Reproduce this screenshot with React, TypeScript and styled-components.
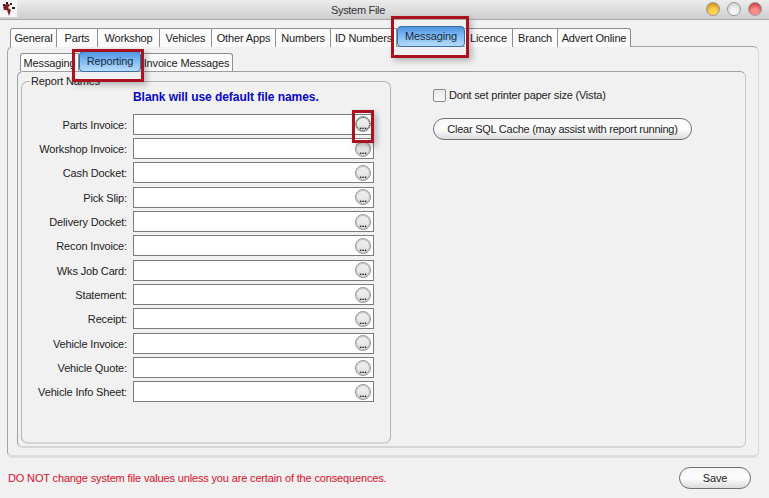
import React from "react";
import styled, { createGlobalStyle } from "styled-components";

const GlobalStyle = createGlobalStyle`
  html, body {
    margin: 0;
    padding: 0;
    background: #f0f0f0;
  }
  body {
    font-family: "Liberation Sans", Arial, sans-serif;
    font-size: 11px;
    letter-spacing: -0.15px;
    color: #222;
  }
`;

const Window = styled.div`
  position: relative;
  width: 769px;
  height: 498px;
  overflow: hidden;
  background: #f1f1f1;
`;

const TitleBar = styled.div`
  height: 19px;
  display: flex;
  align-items: center;
  justify-content: center;
  position: relative;
  background: linear-gradient(#ececec, #cfcfcf);
  border-bottom: 1px solid #a9a9a9;
`;

const TitleText = styled.span`
  color: #333;
  font-size: 11px;
  letter-spacing: -0.3px;
  margin-right: 53px;
`;

const AppIcon = styled.div`
  position: absolute;
  left: 0;
  top: 0;
  width: 17px;
  height: 17px;
  background: #f7f7f7;
  display: flex;
  align-items: center;
  justify-content: center;
`;

const WindowButtons = styled.div`
  position: absolute;
  right: 7px;
  top: 2px;
  display: flex;
  gap: 7px;
`;

const WindowButton = styled.div<{ $color: string; $dark: string }>`
  width: 14px;
  height: 14px;
  border-radius: 50%;
  border: 1px solid #9a9a9a;
  box-sizing: border-box;
  background: radial-gradient(circle at 50% 75%, ${(p) => p.$color} 30%, ${(p) => p.$dark} 100%);
`;

const MainTabs = styled.div`
  display: flex;
  height: 19px;
  margin: 8px 0 0 10px;
  position: relative;
  z-index: 1;
`;

const Tab = styled.div<{ $w: number; $active?: boolean }>`
  width: ${(p) => p.$w}px;
  height: 100%;
  box-sizing: border-box;
  display: flex;
  align-items: center;
  justify-content: center;
  white-space: nowrap;
  background: #fbfbfb;
  border: 1px solid #8e8e8e;
  border-left-width: 0;
  border-bottom: 0;
  font-size: 11px;
  color: #222;
  &:first-child {
    border-left-width: 1px;
    border-radius: 3px 0 0 0;
  }
  &:last-child {
    border-radius: 0 3px 0 0;
  }
  ${(p) =>
    p.$active &&
    `
    height: 21px;
    margin-top: -2px;
    padding-bottom: 2px;
    border: 1px solid #3a6ea8;
    border-radius: 4px;
    background: linear-gradient(#4e95e4 0%, #7db9f2 45%, #b7dcfb 100%);
    color: #1c2b3a;
  `}
`;

const OuterPanel = styled.div`
  box-sizing: border-box;
  width: 752px;
  height: 412px;
  margin: -1px 0 0 7px;
  padding: 6px 13px 0 9px;
  border: 1px solid #a5a5a5;
  border-right-color: #d9d9d9;
  border-bottom: 3px solid #dcdcdc;
  border-radius: 6px;
  background: #f1f1f1;
`;

const SubTabs = styled(MainTabs)`
  height: 18px;
  margin: 0 0 0 3px;
`;

const InnerPanel = styled.div`
  box-sizing: border-box;
  height: 377px;
  width: 729px;
  margin-top: 0;
  padding: 9px 0 0 3px;
  display: flex;
  border: 1px solid #9f9f9f;
  border-right-color: #c9c9c9;
  border-bottom: 2px solid #d6d6d6;
  border-radius: 6px;
  background: #f1f1f1;
`;

const ReportGroup = styled.fieldset`
  box-sizing: border-box;
  position: relative;
  width: 370px;
  height: 363px;
  margin: 0;
  padding: 0;
  border: 1px solid #b5b5b5;
  border-bottom: 2px solid #d3d3d3;
  border-radius: 7px;
`;

const GroupLegend = styled.span`
  position: absolute;
  left: 8px;
  top: -7px;
  padding: 0 1px;
  background: #f1f1f1;
  font-size: 11px;
  line-height: 13px;
`;

const Hint = styled.div`
  margin: 8px 0 0 111px;
  height: 14px;
  line-height: 14px;
  font-size: 12px;
  font-weight: bold;
  color: #0808c8;
  letter-spacing: -0.05px;
`;

const Rows = styled.div`
  display: grid;
  grid-auto-rows: 24.35px;
  margin-top: 8px;
`;

const Row = styled.div`
  display: flex;
  align-items: center;
`;

const RowLabel = styled.label`
  width: 105px;
  padding-top: 1px;
  text-align: right;
  font-size: 11px;
  white-space: nowrap;
`;

const FileBox = styled.div`
  box-sizing: border-box;
  width: 241px;
  height: 21px;
  margin-left: 6px;
  display: flex;
  align-items: center;
  justify-content: flex-end;
  padding-right: 2px;
  background: #fff;
  border: 1px solid #7c7c7c;
`;

const BrowseButton = styled.div<{ $focus?: boolean }>`
  width: 16px;
  height: 16px;
  box-sizing: border-box;
  border-radius: 50%;
  border: 1px solid #969696;
  box-shadow: inset 0 0 0 1px #c8c8c8;
  background: linear-gradient(#ececec 40%, #dcdcdc);
  display: flex;
  align-items: flex-end;
  justify-content: center;
  font-size: 9px;
  font-weight: bold;
  line-height: 9px;
  letter-spacing: 0;
  color: #000;
  ${(p) => p.$focus && "outline: 1px dotted #444; outline-offset: -2px;"}
`;

const OptionsColumn = styled.div`
  margin-left: 42px;
  padding-top: 6px;
  display: flex;
  flex-direction: column;
  align-items: flex-start;
`;

const CheckRow = styled.label`
  display: flex;
  align-items: center;
  gap: 3px;
  height: 16px;
  font-size: 11px;
  letter-spacing: -0.2px;
`;

const CheckBox = styled.span`
  box-sizing: border-box;
  width: 13px;
  height: 13px;
  border: 1px solid #8a8a8a;
  border-radius: 2px;
  background: linear-gradient(#e9e9e9, #f9f9f9);
`;

const PillButton = styled.div<{ $w: number }>`
  box-sizing: border-box;
  width: ${(p) => p.$w}px;
  height: 22px;
  display: flex;
  align-items: center;
  justify-content: center;
  border: 1px solid #6f6f6f;
  border-radius: 11px;
  background: linear-gradient(#f7f7f7 0%, #fdfdfd 50%, #dcdcdc 100%);
  font-size: 11px;
  white-space: nowrap;
`;

const ClearButton = styled(PillButton)`
  margin-top: 15px;
  letter-spacing: -0.25px;
`;

const Footer = styled.div`
  display: flex;
  align-items: center;
  justify-content: space-between;
  margin-top: 9px;
  padding: 0 18px 0 8px;
`;

const Warning = styled.span`
  color: #d80f2a;
  font-size: 11px;
`;

const Callout = styled.div<{ $x: number; $y: number; $w: number; $h: number }>`
  position: absolute;
  left: ${(p) => p.$x}px;
  top: ${(p) => p.$y}px;
  width: ${(p) => p.$w}px;
  height: ${(p) => p.$h}px;
  box-sizing: border-box;
  border: 3px solid #a8131f;
  box-shadow: 3px 3px 6px rgba(0, 0, 0, 0.25);
  z-index: 5;
  pointer-events: none;
`;

const mainTabs = [
  { name: "General", w: 47 },
  { name: "Parts", w: 41 },
  { name: "Workshop", w: 62 },
  { name: "Vehicles", w: 52 },
  { name: "Other Apps", w: 64 },
  { name: "Numbers", w: 55 },
  { name: "ID Numbers", w: 66 },
  { name: "Messaging", w: 68, active: true },
  { name: "Licence", w: 48 },
  { name: "Branch", w: 45 },
  { name: "Advert Online", w: 73 },
];

const subTabs = [
  { name: "Messaging", w: 59 },
  { name: "Reporting", w: 62, active: true },
  { name: "Invoice Messages", w: 92 },
];

const reports = [
  "Parts Invoice:",
  "Workshop Invoice:",
  "Cash Docket:",
  "Pick Slip:",
  "Delivery Docket:",
  "Recon Invoice:",
  "Wks Job Card:",
  "Statement:",
  "Receipt:",
  "Vehicle Invoice:",
  "Vehicle Quote:",
  "Vehicle Info Sheet:",
];

const App = () => {
  return (
    <Window>
      <GlobalStyle />
      <TitleBar>
        <AppIcon>
          <svg width="14" height="16" viewBox="0 0 14 16">
            <path d="M1 6 L5 2 L8 4 L6 7 L9 9 L7 15 L5 9 L2 9 Z" fill="#8a1c24" />
            <path d="M4 1h2v2H4zM8 2h2v2H8zM10 6h3v2h-3zM1 3h2v2H1z" fill="#222" />
          </svg>
        </AppIcon>
        <TitleText>System File</TitleText>
        <WindowButtons>
          <WindowButton $color="#ffd24a" $dark="#c47a0c" />
          <WindowButton $color="#f4f4f4" $dark="#c4c4c4" />
          <WindowButton $color="#ff8d8d" $dark="#b4242c" />
        </WindowButtons>
      </TitleBar>

      <MainTabs>
        {mainTabs.map((t) => (
          <Tab key={t.name} $w={t.w} $active={t.active}>
            {t.name}
          </Tab>
        ))}
      </MainTabs>

      <OuterPanel>
        <SubTabs>
          {subTabs.map((t) => (
            <Tab key={t.name} $w={t.w} $active={t.active}>
              {t.name}
            </Tab>
          ))}
        </SubTabs>
        <InnerPanel>
          <ReportGroup>
            <GroupLegend>Report Names</GroupLegend>
            <Hint>Blank will use default file names.</Hint>
            <Rows>
              {reports.map((r, i) => (
                <Row key={r}>
                  <RowLabel>{r}</RowLabel>
                  <FileBox>
                    <BrowseButton $focus={i === 0}>...</BrowseButton>
                  </FileBox>
                </Row>
              ))}
            </Rows>
          </ReportGroup>
          <OptionsColumn>
            <CheckRow>
              <CheckBox />
              Dont set printer paper size (Vista)
            </CheckRow>
            <ClearButton $w={259}>Clear SQL Cache (may assist with report running)</ClearButton>
          </OptionsColumn>
        </InnerPanel>
      </OuterPanel>

      <Footer>
        <Warning>DO NOT change system file values unless you are certain of the consequences.</Warning>
        <PillButton $w={72}>Save</PillButton>
      </Footer>

      <Callout $x={391} $y={16} $w={78} $h={42} />
      <Callout $x={72} $y={49} $w={72} $h={33} />
      <Callout $x={352} $y={110} $w={22} $h={33} />
    </Window>
  );
};

export default App;
